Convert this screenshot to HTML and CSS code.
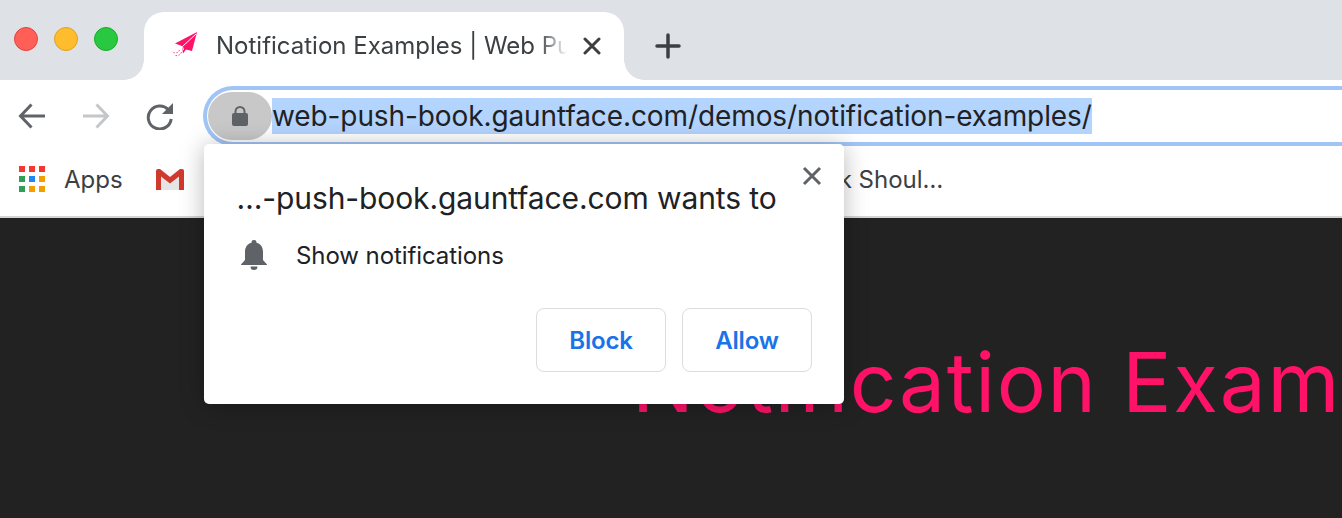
FILE: index.html
```html
<!DOCTYPE html>
<html lang="en">
<head>
<meta charset="utf-8">
<title>Notification Examples</title>
<link rel="stylesheet" href="styles.css">
</head>
<body>
<div class="browser">
  <header class="tabstrip">
    <div class="lights">
      <span class="light light-red"></span>
      <span class="light light-yellow"></span>
      <span class="light light-green"></span>
    </div>
    <div class="tab">
      <svg class="favicon" width="26" height="26" viewBox="0 0 26 26">
        <path d="M26 0 L4 11.500 L11 14 L12 21.500 L15 17.500 L21 19 Z" fill="#ff1268"/>
        <path d="M25 2 L11.500 14.500 L12.500 18" fill="none" stroke="#fff" stroke-width="1"/>
        <path d="M8.500 18 C7 21.500 4 22 1 19.500 M10.500 20 C9.500 23 7 24 4 23.500" fill="none" stroke="#ff1268" stroke-width=".8" stroke-dasharray="1.500 1.500"/>
      </svg>
      <span class="tab-title">Notification Examples | Web Push Book</span>
      <svg class="tab-close" width="18" height="18" viewBox="0 0 18 18"><path d="M2 2 L16 16 M16 2 L2 16" stroke="#3c4043" stroke-width="3" stroke-linecap="round"/></svg>
    </div>
    <svg class="new-tab" width="26" height="26" viewBox="0 0 26 26"><path d="M13 2 V24 M2 13 H24" stroke="#3c4043" stroke-width="3.500" stroke-linecap="round"/></svg>
  </header>

  <div class="toolbar">
    <svg class="nav-icon" width="28" height="28" viewBox="0 0 28 28"><path d="M27 14 H3 M13.500 2.500 L2.500 14 L13.500 25.500" fill="none" stroke="#5f6368" stroke-width="3"/></svg>
    <svg class="nav-icon" width="28" height="28" viewBox="0 0 28 28"><path d="M1 14 H25 M14.500 2.500 L25.500 14 L14.500 25.500" fill="none" stroke="#c4c6c9" stroke-width="3"/></svg>
    <svg class="nav-icon" width="28" height="28" viewBox="0 0 28 28"><path d="M22.500 8 A11.500 11.500 0 1 0 25.200 17" fill="none" stroke="#5f6368" stroke-width="3"/><path d="M27 1 V12 H16 Z" fill="#5f6368"/></svg>
    <div class="omnibox">
      <span class="lock-chip">
        <svg width="18" height="22" viewBox="0 0 18 22"><path d="M4.500 9 V6.500 A4.500 4.500 0 0 1 13.500 6.500 V9" fill="none" stroke="#5f6368" stroke-width="2"/><rect x="1" y="8" width="16" height="13" rx="2" fill="#5f6368"/></svg>
      </span>
      <span class="url">web-push-book.gauntface.com/demos/notification-examples/</span>
    </div>
  </div>

  <nav class="bookmarks">
    <span class="apps-grid">
      <i class="r"></i><i class="r"></i><i class="r"></i>
      <i class="g"></i><i class="b"></i><i class="y"></i>
      <i class="g"></i><i class="y"></i><i class="y"></i>
    </span>
    <span class="bm-label">Apps</span>
    <svg class="gmail" width="28" height="22" viewBox="0 0 28 22">
      <path d="M0 1 H28 V21 H0 Z" fill="#e4e4e4"/>
      <path d="M3 3 L14 12 L25 3 V1 H3 Z" fill="#f7f7f7"/>
      <path d="M0 21 V2 Q0 0 2 0 H4 L14 8 L24 0 H26 Q28 0 28 2 V21 H23 V7.500 L14 14.500 L5 7.500 V21 Z" fill="#d0392e"/>
    </svg>
    <span class="bm-label bm-hidden-end">k Shoul…</span>
  </nav>

  <main class="page">
    <h1 class="page-title">Notification Examples</h1>
  </main>

  <section class="prompt">
    <svg class="prompt-close" width="20" height="20" viewBox="0 0 20 20"><path d="M2 2 L18 18 M18 2 L2 18" stroke="#5f6368" stroke-width="3"/></svg>
    <h2 class="prompt-title">…-push-book.gauntface.com wants to</h2>
    <div class="prompt-row">
      <svg width="26" height="30" viewBox="0 0 26 30"><path d="M13 0 A2.500 2.500 0 0 1 15.500 2.800 C20 4 22 7.500 22 12 V20 L26 24.500 V25 H0 V24.500 L4 20 V12 C4 7.500 6 4 10.500 2.800 A2.500 2.500 0 0 1 13 0 Z M9.500 26.500 H16.500 A3.500 3.500 0 0 1 9.500 26.500 Z" fill="#5f6368"/></svg>
      <span>Show notifications</span>
    </div>
    <div class="prompt-actions">
      <button class="prompt-btn">Block</button>
      <button class="prompt-btn">Allow</button>
    </div>
  </section>
</div>
</body>
</html>
```
FILE: styles.css
```css
* { box-sizing: border-box; }
html, body { margin: 0; padding: 0; background: #222; }
body { overflow: hidden; font-family: Inter, "Liberation Sans", sans-serif; }
.browser { position: relative; width: 1342px; height: 518px; overflow: hidden; display: flex; flex-direction: column; }

.tabstrip { height: 80px; flex: none; background: #dee1e6; display: flex; align-items: flex-end; }
.lights { width: 144px; align-self: stretch; display: flex; gap: 16px; padding: 27px 0 0 14px; }
.light { width: 24px; height: 24px; border-radius: 50%; border: 1px solid; }
.light-red { background: #ff5f57; border-color: #e0443e; }
.light-yellow { background: #ffbd2e; border-color: #dea123; }
.light-green { background: #28c940; border-color: #1aab29; }

.tab { position: relative; width: 480px; height: 68px; background: #fff; border-radius: 20px 20px 0 0; display: flex; align-items: center; padding: 0 0 0 27px; }
.tab::before, .tab::after { content: ""; position: absolute; bottom: 0; width: 20px; height: 20px; }
.tab::before { right: 100%; background: radial-gradient(circle at 0 0, #dee1e6 19.500px, #fff 20px); }
.tab::after { left: 100%; background: radial-gradient(circle at 100% 0, #dee1e6 19.500px, #fff 20px); }
.favicon { flex: none; margin: -2px 0 0 0; }
.tab-title { width: 351px; margin-left: 19px; font-size: 24px; line-height: 32px; color: #3c4043; white-space: nowrap; overflow: hidden; -webkit-mask-image: linear-gradient(to right, #000 92%, transparent); mask-image: linear-gradient(to right, #000 92%, transparent); }
.tab-close { flex: none; margin-left: 16px; }
.new-tab { flex: none; margin: 0 0 21px 31px; }

.toolbar { height: 66px; flex: none; background: #fff; display: flex; align-items: center; gap: 36px; padding: 5px 0 0 18px; }
.nav-icon { flex: none; }
.omnibox { flex: none; align-self: flex-end; width: 1200px; height: 60px; margin-left: -7px; border: 4px solid #a1c4f7; border-right: 0; border-radius: 30px 0 0 30px; display: flex; align-items: center; padding-left: 1px; }
.lock-chip { width: 64px; height: 48px; background: #c8c8c8; border-radius: 24px; display: flex; align-items: center; justify-content: center; flex: none; }
.url { font-size: 28px; letter-spacing: -0.1px; line-height: 36px; color: #1f2124; background: #b3d4fd; white-space: nowrap; }

.bookmarks { height: 72px; flex: none; background: #fff; border-bottom: 2px solid #d3d4d6; display: flex; align-items: center; padding: 0 0 3px 19px; }
.apps-grid { display: grid; grid-template-columns: repeat(3, 6px); grid-auto-rows: 6px; gap: 4px; flex: none; margin-bottom: 1px; }
.apps-grid i { display: block; }
.apps-grid .r { background: #f4382f; }
.apps-grid .g { background: #2f9e57; }
.apps-grid .b { background: #1e88f0; }
.apps-grid .y { background: #f49f00; }
.bm-label { font-size: 24px; color: #3c4043; margin-left: 19px; white-space: nowrap; }
.gmail { flex: none; margin-left: 33px; }
.bm-hidden-end { margin-left: 655px; }

.page { flex: 1; background: #222; padding: 115px 0 0 632px; overflow: hidden; }
.page-title { margin: 0; font-weight: 400; font-size: 82px; letter-spacing: 1.65px; line-height: 100px; color: #ff1268; white-space: nowrap; }

.prompt { position: absolute; left: 204px; top: 144px; width: 640px; height: 260px; background: #fff; border-radius: 5px; box-shadow: 0 2px 24px rgba(0,0,0,.28); padding: 36px 32px 0 32.500px; }
.prompt-close { position: absolute; right: 22px; top: 22px; }
.prompt-title { margin: 0; font-size: 30px; letter-spacing: -0.1px; font-weight: 400; line-height: 36px; color: #202124; white-space: nowrap; }
.prompt-row { display: flex; align-items: center; gap: 29px; margin: 24px 0 0 4.500px; font-size: 24px; letter-spacing: -0.08px; color: #202124; }
.prompt-actions { display: flex; justify-content: flex-end; gap: 16px; margin-top: 38px; }
.prompt-btn { width: 130px; height: 64px; background: #fff; border: 1px solid #dadce0; border-radius: 8px; font: 600 24px Inter, "Liberation Sans", sans-serif; letter-spacing: -0.2px; color: #1a73e8; }
```
